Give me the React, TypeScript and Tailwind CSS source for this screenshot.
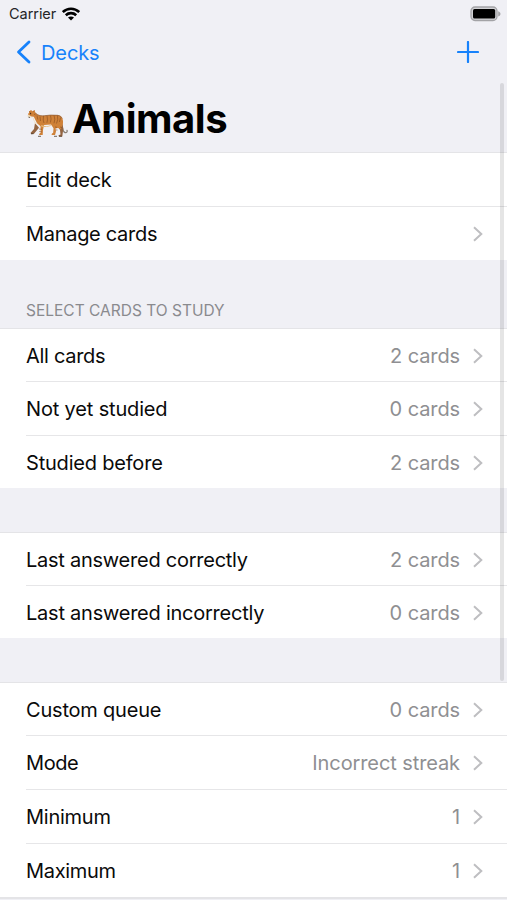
import React from "react";

interface RowItem {
  label: string;
  value?: string;
  link?: boolean;
  height: string;
  tracking: string;
}

const DECK_ROWS: RowItem[] = [
  { label: "Edit deck", height: "h-[54px]", tracking: "tracking-[-0.22px]" },
  { label: "Manage cards", link: true, height: "h-[53px]", tracking: "tracking-[-0.3px]" },
];

const STUDY_ROWS: RowItem[] = [
  { label: "All cards", value: "2 cards", link: true, height: "h-[53px]", tracking: "tracking-[-0.3px]" },
  { label: "Not yet studied", value: "0 cards", link: true, height: "h-[54px]", tracking: "tracking-[-0.16px]" },
  { label: "Studied before", value: "2 cards", link: true, height: "h-[52px]", tracking: "tracking-[-0.2px]" },
];

const ANSWER_ROWS: RowItem[] = [
  { label: "Last answered correctly", value: "2 cards", link: true, height: "h-[53px]", tracking: "tracking-[-0.25px]" },
  { label: "Last answered incorrectly", value: "0 cards", link: true, height: "h-[52px]", tracking: "tracking-[-0.24px]" },
];

const QUEUE_ROWS: RowItem[] = [
  { label: "Custom queue", value: "0 cards", link: true, height: "h-[53px]", tracking: "tracking-[-0.2px]" },
  { label: "Mode", value: "Incorrect streak", link: true, height: "h-[54px]", tracking: "tracking-[-0.4px]" },
  { label: "Minimum", value: "1", link: true, height: "h-[54px]", tracking: "tracking-[-0.25px]" },
  { label: "Maximum", value: "1", link: true, height: "h-[53px]", tracking: "tracking-[-0.3px]" },
];

const WifiIcon = () => (
  <svg width="18" height="14" viewBox="0 0 18 14" fill="none" stroke="#000" strokeWidth="2.6">
    <path d="M.8 5C5.500.6 12.500.6 17.200 5" />
    <path d="M3.800 8.200c2.900-2.800 7.500-2.800 10.400 0" />
    <path d="M9 13.500 6 10.500c1.700-1.500 4.300-1.500 6 0z" fill="#000" stroke="none" />
  </svg>
);

const BatteryIcon = () => (
  <svg width="31" height="16" viewBox="0 0 31 16">
    <rect x="1" y="1" width="26" height="13.500" rx="4" fill="#d2d2d5" stroke="#a3a3a6" strokeWidth="1.300" />
    <rect x="3" y="3" width="22.200" height="9.500" rx="1.500" fill="#000" />
    <path d="M28.200 5.300c3 1.200 3 4 0 5.200z" fill="#a3a3a6" />
  </svg>
);

const TigerIcon = () => (
  <svg width="43" height="29" viewBox="0 0 43 29" fill="none">
    <path d="M36 17c1 4 1 6 3 6.500 2 .4 2.500-1 2-2.200" stroke="#8b8075" strokeWidth="1.300" strokeLinecap="round" />
    <path d="M9 14 8 20l-3.500 4 1 1.200 2.500-.4 5-6zM31 16l3 5 .5 4.500-2 .8.300 1.200h3.500l1-8-1-6z" fill="#946440" />
    <path d="M3 2.500 5 1l1.500 1.200L8.500 1l.8 2.500c2 2.500 4.500 3.500 8 3.200l7-.7 7 .1c3.500.4 5.500 2.500 5.700 6 .2 3-.5 5-1.500 6.500l-.5 2-3-1.500-2.500.500.500 3-1 3.500h-3.500l.5-1.500 1.200-.8.300-4.500-2.500-3.800-7 .500-1 5-.300 5.100h-3.700l.5-1.500 1.200-.8-.2-6.500-3.500-3-3.200-6.500-2.500-.200-2.800-1.300-.500-1.500 1-.8z" fill="#cf8138" />
    <path d="m2 6 2 .4 1.500 2 1.800.3 1.500 4 2.500 2.500-.5.8-2-1.700-2.200-5.200-4-1-1.300-1.200z" fill="#efddbb" />
    <path d="M15 16c4 1.500 7 1.500 10 0l-.5 1c-3 1-6 1.200-9 .7z" fill="#e3b67a" />
    <path d="m3.500 2.500 1.200 1M7.500 2.500l.8-.8M8 5l1.500 1M11 6.500l.8 4M14 7.500l.5 4.500M17.500 7l-.3 4 .8 3M21 6.800l.5 4-.6 3M24.500 6.500l.6 3.500-.7 3.500M28 6.300l.8 4-.8 4M31.500 6.500l.2 4-1.200 4M34.500 8.500l-1 4.500M13 20l3 .3M13.200 22.500l2.600.3M29 18l2 .4M29.500 21h2M34 18l2 .5" stroke="#82481c" strokeWidth=".8" strokeOpacity=".7" />
    <path d="M9.500 4.200c3 2.700 6 2.900 9 2.500l6-.6 7 .2c2.500.4 4 1.500 4.800 3.200" stroke="#8b5a34" strokeWidth="1" strokeOpacity=".7" />
    <path d="M2.500 8.200 4 8.500M5 24.700h2.500M12 27.300h3M28 27.300h3M33 27.300h3" stroke="#4e3c2d" strokeWidth=".8" />
    <circle cx="4.600" cy="4.700" r=".6" fill="#292018" />
  </svg>
);

const Chevron = () => (
  <svg className="ml-[13px] shrink-0" width="10" height="16" viewBox="0 0 10 16" fill="none" stroke="#bebec1" strokeWidth="2">
    <path d="m1 1.300 7.300 6.700L1 14.700" />
  </svg>
);

const Row = ({ item }: { item: RowItem }) => (
  <div className={`flex items-center border-b border-[#e6e6e8] pr-[24px] pt-[1px] last:border-b-0 ${item.height}`}>
    <span className={`flex-1 whitespace-nowrap text-[#0a0a0a] ${item.tracking}`}>{item.label}</span>
    {item.value && <span className="whitespace-nowrap text-[#8f8f92]">{item.value}</span>}
    {item.link && <Chevron />}
  </div>
);

const Group = ({ rows }: { rows: RowItem[] }) => (
  <div className="bg-white pl-[26px] shadow-[0_-1px_0_#e4e4e7]">
    {rows.map((item) => (
      <Row key={item.label} item={item} />
    ))}
  </div>
);

const App: React.FC = () => {
  return (
    <main className="relative flex h-[900px] w-[507px] flex-col overflow-hidden bg-[#f0f0f5] font-['Inter',sans-serif] text-[20px] leading-[26px] tracking-[-0.1px]">
      <div className="flex h-[27px] shrink-0 items-center justify-between pl-[9px] pr-[6px]">
        <div className="flex items-center gap-[6px]">
          <span className="text-[14.5px] tracking-[-0.05px] text-[#252527]">Carrier</span>
          <WifiIcon />
        </div>
        <BatteryIcon />
      </div>

      <div className="flex h-[50px] shrink-0 items-center justify-between pl-[16px] pr-[28px] text-[#1782fb]">
        <button className="flex items-center gap-[10px]">
          <svg width="15" height="24" viewBox="0 0 15 24" fill="none" stroke="currentColor" strokeWidth="2.800" strokeLinecap="round" strokeLinejoin="round">
            <path d="M13 2 2.500 12 13 22" />
          </svg>
          <span className="pt-[2px]">Decks</span>
        </button>
        <svg width="22" height="22" viewBox="0 0 22 22" stroke="currentColor" strokeWidth="2.200" strokeLinecap="round">
          <path d="M11 1v20M1 11h20" />
        </svg>
      </div>

      <div className="flex h-[76px] shrink-0 items-center pl-[26px] pt-[8px]">
        <div className="mt-[9px]">
          <TigerIcon />
        </div>
        <h1 className="ml-[3px] text-[40px] font-bold leading-[48px] tracking-[-0.5px] text-black">Animals</h1>
      </div>

      <Group rows={DECK_ROWS} />
      <h2 className="flex h-[69px] shrink-0 items-end pb-[5px] pl-[26px] text-[15.5px] tracking-[0px] text-[#8a8a8e]">
        SELECT CARDS TO STUDY
      </h2>
      <Group rows={STUDY_ROWS} />
      <div className="h-[45px] shrink-0" />
      <Group rows={ANSWER_ROWS} />
      <div className="h-[45px] shrink-0" />
      <Group rows={QUEUE_ROWS} />
      <div className="h-[2px] shrink-0 bg-[#e4e4e7]" />

      {/* scroll indicator */}
      <div className="absolute right-[3px] top-[83px] h-[598px] w-[4px] rounded-full bg-black/10" />
    </main>
  );
};

export default App;
